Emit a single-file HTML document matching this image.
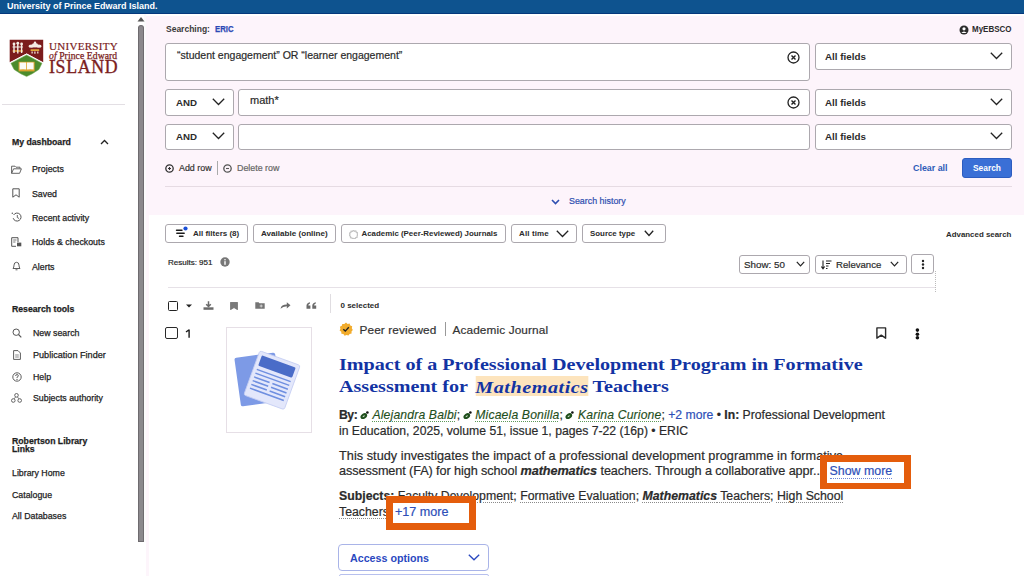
<!DOCTYPE html>
<html><head><meta charset="utf-8">
<style>
*{box-sizing:border-box;margin:0;padding:0}
html,body{width:1024px;height:576px;overflow:hidden;background:#fff;font-family:"Liberation Sans",sans-serif;color:#222}
#sidebar .a{color:#1e1e1e;-webkit-text-stroke:0.25px #1e1e1e}
.a{position:absolute;white-space:nowrap}
.b{font-weight:bold}
.w{-webkit-text-stroke:0.2px currentColor}
.box{position:absolute;background:#fff;border:1px solid #aca8ae;border-radius:3px}
.chev{position:absolute}
.an{letter-spacing:0.15px;color:#1f4f1c;text-decoration:underline dotted #5f9a5a;text-decoration-thickness:1px;text-underline-offset:1.5px;-webkit-text-stroke:0.15px #1f4f1c}
.au{vertical-align:-0.5px;margin:0 0.2px 0 -0.8px}
.hl{background:#fde4bd;letter-spacing:0.5px;padding:0.5px 0 0 0;margin-left:2.2px;margin-right:-0.8px}
.su{text-decoration:underline dotted #8a8a8a;text-decoration-thickness:1px;text-underline-offset:1.5px}
</style></head><body>

<!-- top bar -->
<div class="a" style="left:0;top:0;width:1024px;height:12.5px;background:#0e538f"></div>
<div class="a" style="left:0;top:12.5px;width:1024px;height:1.6px;background:#04387c"></div>
<div class="a b" style="left:7px;top:1px;font-size:9px;line-height:11px;color:#fff">University of Prince Edward Island.</div>

<!-- sidebar -->
<div id="sidebar">
 <!-- logo -->
 <svg class="a" style="left:9px;top:39px" width="35" height="40" viewBox="0 0 35 40">
  <path d="M0.7 0.8 H34.2 V23.2 L17.6 14.4 L0.7 23.2 Z" fill="#7b1c1c"/>
  <path d="M0.7 23.6 L17.6 14.6 L34.2 23.6 L30.8 30.8 Q24 35.5 17.6 38.7 Q11 35.5 4.2 30.8 Z" fill="#fff"/>
  <path d="M1.9 24.2 L17.6 15.9 L33 24.2 L30 30.4 Q23.5 35 17.6 37.6 Q11.5 35 5 30.4 Z" fill="#4b8b2c" stroke="#7fb463" stroke-width="0.5"/>
  <rect x="9.6" y="22.8" width="16" height="9.6" fill="#dca22e"/>
  <path d="M10.6 23.6 H17.2 V30.6 Q14 29.8 10.6 30.6Z M18 23.6 H24.6 V30.6 Q21.2 29.8 18 30.6Z" fill="#fbfbf6"/>
  <path d="M3.6 11.2 H14 V12.8 H3.6Z M21.6 10.2 H30.2 V12 H21.6Z" fill="#e2a83a"/>
  <g fill="#f4ece4">
   <circle cx="5" cy="5" r="1.4"/><circle cx="8.8" cy="4.2" r="1.4"/><circle cx="12.6" cy="5" r="1.4"/>
   <path d="M4.3 5 h1.4 v9 h-1.4z M8.1 4.5 h1.4 v10 h-1.4z M11.9 5 h1.4 v9 h-1.4z M3.5 7.5 H14 V8.6 H3.5Z"/>
   <ellipse cx="22.3" cy="7.2" rx="2.8" ry="1.6"/><ellipse cx="29.8" cy="7.2" rx="2.8" ry="1.6"/><ellipse cx="26" cy="6.2" rx="3" ry="2.2"/><circle cx="26" cy="3.8" r="1.2"/>
   <path d="M22.5 12.5 h1.2 v2 h-1.2z M25.3 12.5 h1.2 v2.2 h-1.2z M28.2 12.5 h1.2 v2 h-1.2z"/>
  </g>
 </svg>
 <div class="a" style="left:49px;top:40px;font-family:'Liberation Serif',serif;font-size:11px;line-height:12px;color:#7b1d1d;letter-spacing:0.3px;-webkit-text-stroke:0.2px #7b1d1d">UNIVERSITY</div>
 <div class="a" style="left:49px;top:49.5px;font-family:'Liberation Serif',serif;font-size:9.6px;line-height:11px;color:#7b1d1d;letter-spacing:0.1px;-webkit-text-stroke:0.25px #7b1d1d"><i>of</i> Prince Edward</div>
 <div class="a" style="left:49px;top:57.5px;font-family:'Liberation Serif',serif;font-size:17.8px;line-height:18px;color:#7b1d1d;letter-spacing:0.7px;-webkit-text-stroke:0.35px #7b1d1d">ISLAND</div>
 <div class="a" style="left:2px;top:104px;width:123px;height:1px;background:#e3dfe4"></div>

 <div class="a b" style="left:12px;top:137px;font-size:8.7px;line-height:11px">My dashboard</div>
 <svg class="a" style="left:100px;top:139px" width="9" height="6" viewBox="0 0 9 6"><path d="M1 5 L4.5 1.5 L8 5" fill="none" stroke="#222" stroke-width="1.3"/></svg>

 <div class="a" style="left:32px;top:164px;font-size:8.8px;line-height:11px">Projects</div>
 <div class="a" style="left:32px;top:188.5px;font-size:8.8px;line-height:11px">Saved</div>
 <div class="a" style="left:32px;top:213px;font-size:8.8px;line-height:11px">Recent activity</div>
 <div class="a" style="left:32px;top:237px;font-size:8.8px;line-height:11px">Holds &amp; checkouts</div>
 <div class="a" style="left:32px;top:261.5px;font-size:8.8px;line-height:11px">Alerts</div>

 <div class="a b" style="left:12px;top:304px;font-size:8.7px;line-height:11px">Research tools</div>
 <div class="a" style="left:33px;top:328px;font-size:8.8px;line-height:11px">New search</div>
 <div class="a" style="left:33px;top:350px;font-size:9.1px;line-height:11px">Publication Finder</div>
 <div class="a" style="left:33px;top:372px;font-size:8.8px;line-height:11px">Help</div>
 <div class="a" style="left:33px;top:393px;font-size:8.8px;line-height:11px">Subjects authority</div>

 <div class="a b" style="left:12px;top:436.5px;font-size:8.7px;line-height:8.4px">Robertson Library<br>Links</div>
 <div class="a" style="left:12px;top:468px;font-size:8.8px;line-height:11px">Library Home</div>
 <div class="a" style="left:12px;top:490px;font-size:8.8px;line-height:11px">Catalogue</div>
 <div class="a" style="left:12px;top:511px;font-size:8.8px;line-height:11px">All Databases</div>
</div>


<!-- sidebar icons -->
<svg class="a" style="left:11px;top:165px" width="11" height="9" viewBox="0 0 11 9"><path d="M0.6 1.2 H4 L5 2.2 H9 V3.5 M0.6 1.2 V8.3 H8.6 L10.4 3.8 H2.6 L0.6 8.3" fill="none" stroke="#555" stroke-width="0.9" stroke-linejoin="round"/></svg>
<svg class="a" style="left:12px;top:188px" width="8" height="10" viewBox="0 0 8 10"><path d="M0.8 0.8 H7.2 V9.2 L4 6.8 L0.8 9.2Z" fill="none" stroke="#555" stroke-width="1" stroke-linejoin="round"/></svg>
<svg class="a" style="left:11px;top:212px" width="11" height="10" viewBox="0 0 11 10"><path d="M2.6 3 A4 4 0 1 1 2.2 6.2" fill="none" stroke="#555" stroke-width="1"/><path d="M6.3 3 V5.5 L8 6.5" fill="none" stroke="#555" stroke-width="0.9"/><circle cx="1.3" cy="1.2" r="0.7" fill="#555"/></svg>
<svg class="a" style="left:11px;top:237px" width="11" height="10" viewBox="0 0 11 10"><path d="M0.7 0.7 H7 V5 M0.7 0.7 V9.3 H5" fill="none" stroke="#555" stroke-width="1"/><path d="M2.2 3 H5.5 M2.2 5 H4.5" stroke="#555" stroke-width="0.8"/><rect x="6" y="5.6" width="4.3" height="3.7" fill="#555"/></svg>
<svg class="a" style="left:12px;top:261px" width="9" height="10" viewBox="0 0 9 10"><path d="M1 7.5 Q2 6.3 2 4.2 Q2 1.3 4.5 1.3 Q7 1.3 7 4.2 Q7 6.3 8 7.5Z" fill="none" stroke="#555" stroke-width="0.95" stroke-linejoin="round"/><path d="M3.5 8.8 H5.5" stroke="#555" stroke-width="0.9"/></svg>

<svg class="a" style="left:12px;top:328px" width="10" height="10" viewBox="0 0 10 10"><circle cx="4.2" cy="4.2" r="3.2" fill="none" stroke="#555" stroke-width="1"/><path d="M6.5 6.5 L9.3 9.3" stroke="#555" stroke-width="1.1"/></svg>
<svg class="a" style="left:13px;top:350px" width="8" height="10" viewBox="0 0 8 10"><path d="M0.6 0.6 H5 L7.4 3 V9.4 H0.6Z" fill="none" stroke="#555" stroke-width="0.95" stroke-linejoin="round"/><path d="M2.2 5 H5.8 M2.2 7 H5.8" stroke="#555" stroke-width="0.7"/></svg>
<svg class="a" style="left:12px;top:372px" width="10" height="10" viewBox="0 0 10 10"><circle cx="5" cy="5" r="4.2" fill="none" stroke="#555" stroke-width="0.95"/><path d="M3.6 4 Q3.6 2.6 5 2.6 Q6.4 2.6 6.4 3.8 Q6.4 4.7 5 5.2 V6" fill="none" stroke="#555" stroke-width="0.9"/><circle cx="5" cy="7.4" r="0.6" fill="#555"/></svg>
<svg class="a" style="left:11px;top:393px" width="11" height="10" viewBox="0 0 11 10"><circle cx="5.5" cy="2.3" r="1.8" fill="none" stroke="#555" stroke-width="0.9"/><circle cx="2.3" cy="7.5" r="1.8" fill="none" stroke="#555" stroke-width="0.9"/><circle cx="8.7" cy="7.5" r="1.8" fill="none" stroke="#555" stroke-width="0.9"/><path d="M4.5 4 L3.2 5.8 M6.5 4 L7.8 5.8" stroke="#555" stroke-width="0.8"/></svg>

<!-- scrollbar -->
<div class="a" style="left:144px;top:14px;width:2px;height:528px;background:#fbfafb"></div>
<svg class="a" style="left:137px;top:16px" width="8" height="6" viewBox="0 0 8 6"><path d="M0.5 5.5 L4 1 L7.5 5.5Z" fill="#555"/></svg>
<div class="a" style="left:137.8px;top:25px;width:6px;height:517px;background:#8b888c;border:1px solid #6e6b6f;border-radius:3px 3px 0.5px 0.5px"></div>
<div class="a" style="left:146px;top:214px;width:2.5px;height:528px;background:#fdf5fb"></div>

<!-- search panel -->
<div class="a" style="left:146px;top:15.5px;width:878px;height:199px;background:#fdf4fb"></div>
<div class="a b" style="left:166px;top:24px;font-size:8.5px;line-height:11px;color:#3a3a3a">Searching:</div>
<div class="a b" style="left:215px;top:23.5px;font-size:9px;line-height:11px;color:#2c48b5;-webkit-text-stroke:0.25px #2c48b5;transform:scaleX(0.86);transform-origin:0 0">ERIC</div>
<svg class="a" style="left:959px;top:25px" width="10" height="10" viewBox="0 0 10 10"><circle cx="5" cy="5" r="4.5" fill="#2b2b2b"/><circle cx="5" cy="3.8" r="1.6" fill="#fff"/><path d="M2.3 8 Q5 5 7.7 8" fill="#fff"/></svg>
<div class="a b" style="left:972px;top:23.5px;font-size:8.7px;line-height:11px;color:#2b2b2b;transform:scaleX(0.92);transform-origin:0 0">MyEBSCO</div>


<!-- search rows -->
<div class="box" style="left:165px;top:43px;width:645px;height:38px"></div>
<div class="a w" style="left:177px;top:49px;font-size:10.5px;line-height:13px;color:#2b2b2b">“student engagement” OR “learner engagement”</div>
<svg class="a" style="left:787px;top:51px" width="13" height="13" viewBox="0 0 13 13"><circle cx="6.5" cy="6.5" r="5.5" fill="none" stroke="#222" stroke-width="1.3"/><path d="M4.5 4.5 L8.5 8.5 M8.5 4.5 L4.5 8.5" stroke="#222" stroke-width="1.4"/></svg>
<div class="box" style="left:815px;top:43px;width:197px;height:27px"></div>
<div class="a b" style="left:825px;top:50px;font-size:9.8px;line-height:13px;color:#2b2b2b">All fields</div>
<svg class="a" style="left:990px;top:52px" width="13" height="8" viewBox="0 0 13 8"><path d="M0.8 0.8 L6.5 6.5 L12.2 0.8" fill="none" stroke="#222" stroke-width="1.3"/></svg>

<div class="box" style="left:165px;top:89px;width:69px;height:27px"></div>
<div class="a b" style="left:176px;top:96px;font-size:9.7px;line-height:13px;color:#2b2b2b">AND</div>
<svg class="a" style="left:212px;top:98px" width="13" height="8" viewBox="0 0 13 8"><path d="M0.8 0.8 L6.5 6.5 L12.2 0.8" fill="none" stroke="#222" stroke-width="1.3"/></svg>
<div class="box" style="left:238px;top:89px;width:572px;height:27px"></div>
<div class="a w" style="left:250px;top:94px;font-size:11px;line-height:13px;color:#2b2b2b">math*</div>
<svg class="a" style="left:787px;top:96px" width="13" height="13" viewBox="0 0 13 13"><circle cx="6.5" cy="6.5" r="5.5" fill="none" stroke="#222" stroke-width="1.3"/><path d="M4.5 4.5 L8.5 8.5 M8.5 4.5 L4.5 8.5" stroke="#222" stroke-width="1.4"/></svg>
<div class="box" style="left:815px;top:89px;width:197px;height:27px"></div>
<div class="a b" style="left:825px;top:96px;font-size:9.8px;line-height:13px;color:#2b2b2b">All fields</div>
<svg class="a" style="left:990px;top:98px" width="13" height="8" viewBox="0 0 13 8"><path d="M0.8 0.8 L6.5 6.5 L12.2 0.8" fill="none" stroke="#222" stroke-width="1.3"/></svg>

<div class="box" style="left:165px;top:124px;width:69px;height:26px"></div>
<div class="a b" style="left:176px;top:130px;font-size:9.7px;line-height:13px;color:#2b2b2b">AND</div>
<svg class="a" style="left:212px;top:132px" width="13" height="8" viewBox="0 0 13 8"><path d="M0.8 0.8 L6.5 6.5 L12.2 0.8" fill="none" stroke="#222" stroke-width="1.3"/></svg>
<div class="box" style="left:238px;top:124px;width:572px;height:26px"></div>
<div class="box" style="left:815px;top:124px;width:197px;height:26px"></div>
<div class="a b" style="left:825px;top:130px;font-size:9.8px;line-height:13px;color:#2b2b2b">All fields</div>
<svg class="a" style="left:990px;top:132px" width="13" height="8" viewBox="0 0 13 8"><path d="M0.8 0.8 L6.5 6.5 L12.2 0.8" fill="none" stroke="#222" stroke-width="1.3"/></svg>

<svg class="a" style="left:165px;top:164px" width="9" height="9" viewBox="0 0 9 9"><circle cx="4.5" cy="4.5" r="3.7" fill="none" stroke="#333" stroke-width="1.3"/><path d="M3 4.5 H6 M4.5 3 V6" stroke="#333" stroke-width="1.1"/></svg>
<div class="a" style="left:179px;top:163px;font-size:8.9px;line-height:11px;color:#333;-webkit-text-stroke:0.2px #333">Add row</div>
<div class="a" style="left:217px;top:161px;width:1px;height:14px;background:#aaa"></div>
<svg class="a" style="left:223px;top:164px" width="9" height="9" viewBox="0 0 9 9"><circle cx="4.5" cy="4.5" r="3.7" fill="none" stroke="#555" stroke-width="1.3"/><path d="M3 4.5 H6" stroke="#555" stroke-width="1.1"/></svg>
<div class="a" style="left:237px;top:163px;font-size:8.9px;line-height:11px;color:#666;-webkit-text-stroke:0.2px #666">Delete row</div>

<div class="a b" style="left:913px;top:163px;font-size:8.9px;line-height:11px;color:#2e5bb8">Clear all</div>
<div class="a" style="left:962px;top:158px;width:50px;height:20px;background:#3a6fd6;border:1px solid #2c5cc0;border-radius:3px"></div>
<div class="a b" style="left:973px;top:163px;font-size:8.4px;line-height:11px;color:#fff">Search</div>

<div class="a" style="left:165px;top:186px;width:847px;height:1px;background:#e6dbe3"></div>
<svg class="a" style="left:551px;top:199px" width="9" height="6" viewBox="0 0 9 6"><path d="M1 1 L4.5 4.5 L8 1" fill="none" stroke="#2e4fb0" stroke-width="1.6"/></svg>
<div class="a w" style="left:569px;top:196px;font-size:8.9px;line-height:11px;color:#2e4fb0">Search history</div>

<!-- filter row -->
<div class="box" style="left:165px;top:224px;width:83px;height:19px"></div>
<svg class="a" style="left:175px;top:225px" width="13" height="14" viewBox="0 0 13 14"><path d="M1.5 5.3 H7 M1.8 8.3 H9.2 M4.5 11.3 H8" stroke="#1a1a1a" stroke-width="1.4" stroke-linecap="round"/><circle cx="10.5" cy="3.5" r="2.1" fill="#1a4fd8"/></svg>
<div class="a b" style="left:193px;top:228px;font-size:8px;line-height:11px;color:#2b2b2b">All filters (8)</div>
<div class="box" style="left:253px;top:224px;width:83px;height:19px"></div>
<div class="a b" style="left:261px;top:228px;font-size:8.1px;line-height:11px;color:#2b2b2b">Available (online)</div>
<div class="box" style="left:341px;top:224px;width:165px;height:19px"></div>
<svg class="a" style="left:348.5px;top:229.5px" width="9" height="9" viewBox="0 0 14 14"><path d="M7 0.6 L8.6 1.9 L10.6 1.5 L11.3 3.4 L13.2 4.2 L12.8 6.2 L13.8 7.9 L12.5 9.4 L12.6 11.4 L10.6 11.9 L9.5 13.6 L7.5 13 L5.6 13.8 L4.4 12.1 L2.4 11.8 L2.3 9.8 L0.6 8.6 L1.4 6.8 L0.9 4.8 L2.8 3.8 L3.3 1.9 L5.3 2.1Z" fill="none" stroke="#c4c4c4" stroke-width="2"/></svg>
<div class="a b" style="left:361.5px;top:228px;font-size:7.9px;line-height:11px;color:#2b2b2b">Academic (Peer-Reviewed) Journals</div>
<div class="box" style="left:511px;top:224px;width:66px;height:19px"></div>
<div class="a b" style="left:519px;top:228px;font-size:8px;letter-spacing:0.12px;line-height:11px;color:#2b2b2b">All time</div>
<svg class="a" style="left:556px;top:230px" width="13" height="8" viewBox="0 0 13 8"><path d="M0.8 0.8 L6.5 6.5 L12.2 0.8" fill="none" stroke="#222" stroke-width="1.3"/></svg>
<div class="box" style="left:582px;top:224px;width:84px;height:19px"></div>
<div class="a b" style="left:590px;top:228px;font-size:7.9px;line-height:11px;color:#2b2b2b">Source type</div>
<svg class="a" style="left:644px;top:230px" width="10" height="7" viewBox="0 0 10 7"><path d="M0.8 0.8 L5 5.5 L9.2 0.8" fill="none" stroke="#222" stroke-width="1.3"/></svg>
<div class="a b" style="left:946px;top:229px;font-size:7.9px;line-height:11px;color:#2b2b2b">Advanced search</div>

<div class="a" style="left:168px;top:257px;font-size:8px;line-height:11px;color:#1e1e1e;-webkit-text-stroke:0.2px #1e1e1e">Results: 951</div>
<svg class="a" style="left:219.5px;top:257px" width="10" height="10" viewBox="0 0 10 10"><circle cx="5" cy="5" r="4.7" fill="#777"/><rect x="4.3" y="4.2" width="1.4" height="3.6" fill="#fff"/><circle cx="5" cy="2.8" r="0.8" fill="#fff"/></svg>

<div class="box" style="left:738.5px;top:254.5px;width:71.5px;height:19.5px"></div>
<div class="a w" style="left:744px;top:258.8px;font-size:9.8px;line-height:12px;color:#2b2b2b">Show: 50</div>
<svg class="a" style="left:796px;top:261px" width="9" height="6" viewBox="0 0 9 6"><path d="M0.8 0.8 L4.5 4.8 L8.2 0.8" fill="none" stroke="#222" stroke-width="1.2"/></svg>
<div class="box" style="left:814.5px;top:254.5px;width:92px;height:19.5px"></div>
<svg class="a" style="left:820.5px;top:259.5px" width="11" height="10" viewBox="0 0 11 10"><path d="M2 0.5 V8.5 M0.3 6.5 L2 8.8 L3.7 6.5 M5 1 H10.5 M5 3.5 H9 M5 6 H7.5 M5 8.5 H6.5" fill="none" stroke="#222" stroke-width="1.1"/></svg>
<div class="a w" style="left:836px;top:258.8px;font-size:9.6px;line-height:12px;color:#2b2b2b">Relevance</div>
<svg class="a" style="left:890px;top:261px" width="9" height="6" viewBox="0 0 9 6"><path d="M0.8 0.8 L4.5 4.8 L8.2 0.8" fill="none" stroke="#222" stroke-width="1.2"/></svg>
<div class="box" style="left:911px;top:254px;width:23px;height:20px"></div>
<svg class="a" style="left:920.5px;top:259px" width="4" height="11" viewBox="0 0 4 11"><circle cx="2" cy="2" r="1.2" fill="#222"/><circle cx="2" cy="5.5" r="1.2" fill="#222"/><circle cx="2" cy="9" r="1.2" fill="#222"/></svg>
<div class="a" style="left:935px;top:271px;width:1px;height:21px;border-left:1px dotted #bbb"></div>
<div class="a" style="left:168px;top:287px;width:767px;height:1px;background:#e6e1e7"></div>


<!-- toolbar -->
<div class="a" style="left:168px;top:301px;width:10px;height:10px;border:1.5px solid #222;border-radius:1.5px"></div>
<svg class="a" style="left:186px;top:304px" width="6" height="4" viewBox="0 0 6 4"><path d="M0 0.5 H6 L3 3.5Z" fill="#222"/></svg>
<svg class="a" style="left:202.5px;top:300.5px" width="11" height="9" viewBox="0 0 11 9"><path d="M5.5 0.3 V5.2 M3.2 3.2 L5.5 5.5 L7.8 3.2" fill="none" stroke="#6a6a6a" stroke-width="1.5"/><path d="M0.5 6.3 H10.5 V8.8 H0.5Z" fill="#6a6a6a"/></svg>
<svg class="a" style="left:230px;top:301.5px" width="8" height="8" viewBox="0 0 8 8"><path d="M0.5 0.3 H7.5 V7.8 L4 5.6 L0.5 7.8Z" fill="#7a7a7a" stroke="#5e5e5e" stroke-width="0.6"/></svg>
<svg class="a" style="left:255px;top:302px" width="10" height="7" viewBox="0 0 10 7"><path d="M0.3 0.3 H3.6 L4.5 1.2 H9.7 V6.7 H0.3Z" fill="#757575"/><path d="M6.2 2.5 V5.5 M4.7 4 H7.7" stroke="#ddd" stroke-width="0.9"/></svg>
<svg class="a" style="left:280px;top:302px" width="11" height="7" viewBox="0 0 11 7"><path d="M0.5 6.8 Q1.3 2.6 6.8 2.6 V0.2 L10.5 3.3 L6.8 6.4 V4.3 Q3 4.3 0.5 6.8Z" fill="#6a6a6a"/></svg>
<svg class="a" style="left:305.5px;top:302px" width="11" height="7" viewBox="0 0 11 7"><path d="M0.5 6.8 V3.6 Q0.5 0.8 4 0.2 V1.4 Q2.3 1.9 2.3 3.4 H4.4 V6.8Z M6.3 6.8 V3.6 Q6.3 0.8 9.8 0.2 V1.4 Q8.1 1.9 8.1 3.4 H10.2 V6.8Z" fill="#6a6a6a"/></svg>
<div class="a" style="left:330px;top:294px;width:1px;height:19px;background:#e0dde1"></div>
<div class="a b" style="left:340.5px;top:300px;font-size:8px;line-height:11px;color:#2b2b2b">0 selected</div>

<!-- result 1 -->
<div class="a" style="left:165px;top:327.2px;width:12.8px;height:11.5px;border:1.8px solid #2a2a2a;border-radius:2px"></div>
<svg class="a" style="left:185px;top:329px" width="6" height="10" viewBox="0 0 6 10"><path d="M4.1 0.6 V8.8 M4.1 0.8 L1 3" fill="none" stroke="#1a1a1a" stroke-width="1.4"/></svg>
<div class="a" style="left:226px;top:327px;width:86px;height:106px;border:1px solid #e6dfe6;background:#fff"></div>
<svg class="a" style="left:226px;top:327px" width="86" height="106" viewBox="0 0 86 106">
 <g transform="translate(32,52.5) rotate(-8)"><rect x="-20.5" y="-24.5" width="41" height="49" rx="2" fill="#7d9ae6"/></g>
 <g transform="translate(46,53.2) rotate(20)">
  <rect x="-21.5" y="-23.5" width="43" height="47" rx="2" fill="#e3e7fb" stroke="#c4cdf3" stroke-width="0.8"/>
  <rect x="-18" y="-20" width="36" height="11" rx="1.2" fill="#4a6cc8"/>
  <g stroke="#6f8fe0" stroke-width="1.5">
   <path d="M-18 -5 H18 M-18 -1 H18 M-18 3 H-1.5 M1.5 3 H18 M-18 7 H-1.5 M1.5 7 H18 M-18 11 H-1.5 M1.5 11 H18 M-18 15 H18"/>
  </g>
 </g>
</svg>

<svg class="a" style="left:338.5px;top:322px" width="14" height="14" viewBox="0 0 14 14"><path d="M7 0.6 L8.6 1.9 L10.6 1.5 L11.3 3.4 L13.2 4.2 L12.8 6.2 L13.8 7.9 L12.5 9.4 L12.6 11.4 L10.6 11.9 L9.5 13.6 L7.5 13 L5.6 13.8 L4.4 12.1 L2.4 11.8 L2.3 9.8 L0.6 8.6 L1.4 6.8 L0.9 4.8 L2.8 3.8 L3.3 1.9 L5.3 2.1Z" fill="#f2ac2c"/><path d="M4.3 7.2 L6.3 9.1 L9.8 5.3" fill="none" stroke="#222" stroke-width="1.4"/></svg>
<div class="a w" style="left:359.5px;top:322.5px;font-size:11.8px;letter-spacing:0.12px;line-height:15px;color:#333">Peer reviewed</div>
<div class="a" style="left:445px;top:322px;width:1px;height:14px;background:#999"></div>
<div class="a w" style="left:452.5px;top:322.5px;font-size:11.8px;letter-spacing:0.12px;line-height:15px;color:#333">Academic Journal</div>
<svg class="a" style="left:876px;top:327px" width="11" height="12" viewBox="0 0 11 12"><path d="M0.9 0.9 H9.6 V11.2 L5.25 8.2 L0.9 11.2Z" fill="none" stroke="#2a2a2a" stroke-width="1.4" stroke-linejoin="round"/></svg>
<svg class="a" style="left:915px;top:327.5px" width="5" height="12" viewBox="0 0 5 12"><circle cx="2.4" cy="2.1" r="1.8" fill="#111"/><circle cx="2.4" cy="6.3" r="1.8" fill="#111"/><circle cx="2.4" cy="9.8" r="1.8" fill="#111"/></svg>

<div class="a b" style="left:339px;top:353px;font-family:'Liberation Serif',serif;font-size:17.5px;line-height:22px;color:#1233a3;transform:scaleX(1.149);transform-origin:0 0">Impact of a Professional Development Program in Formative<br>Assessment for <i class="hl">Mathematics</i> Teachers</div>

<div class="a w" style="left:339px;top:406.5px;font-size:12.2px;line-height:16px;color:#2b2b2b"><b style="letter-spacing:-0.45px">By:</b> <svg class="au" width="9" height="8" viewBox="0 0 9 8"><ellipse cx="3.8" cy="5.1" rx="3.6" ry="2.5" transform="rotate(-35 3.8 5.1)" fill="#1f4f1c"/><ellipse cx="3.7" cy="5.2" rx="1.3" ry="0.6" transform="rotate(-35 3.7 5.2)" fill="#cfe0cc"/><circle cx="7.4" cy="1.5" r="1.3" fill="#111"/></svg> <i class="an">Alejandra Balbi</i>; <svg class="au" width="9" height="8" viewBox="0 0 9 8"><ellipse cx="3.8" cy="5.1" rx="3.6" ry="2.5" transform="rotate(-35 3.8 5.1)" fill="#1f4f1c"/><ellipse cx="3.7" cy="5.2" rx="1.3" ry="0.6" transform="rotate(-35 3.7 5.2)" fill="#cfe0cc"/><circle cx="7.4" cy="1.5" r="1.3" fill="#111"/></svg> <i class="an">Micaela Bonilla</i>; <svg class="au" width="9" height="8" viewBox="0 0 9 8"><ellipse cx="3.8" cy="5.1" rx="3.6" ry="2.5" transform="rotate(-35 3.8 5.1)" fill="#1f4f1c"/><ellipse cx="3.7" cy="5.2" rx="1.3" ry="0.6" transform="rotate(-35 3.7 5.2)" fill="#cfe0cc"/><circle cx="7.4" cy="1.5" r="1.3" fill="#111"/></svg> <i class="an">Karina Curione</i>; <span style="color:#2e4fb8">+2 more</span> • <b>In:</b> Professional Development<br>in Education, 2025, volume 51, issue 1, pages 7-22 (16p) • ERIC</div>

<div class="a w" style="left:339px;top:449px;font-size:12.7px;line-height:15.2px;color:#2b2b2b"><span style="letter-spacing:0.04px">This study investigates the impact of a professional development programme in formative</span><br><span style="letter-spacing:-0.1px">assessment (FA) for high school <b><i>mathematics</i></b> teachers. Through a collaborative appr...</span></div>

<div class="a w" style="left:339px;top:489px;font-size:12.3px;line-height:15.8px;color:#2b2b2b"><b>Subjects:</b> <span class="su">Faculty Development</span>; <span class="su">Formative Evaluation</span>; <span class="su"><b><i>Mathematics</i></b> Teachers</span>; <span class="su">High School</span><br><span class="su">Teachers</span>; </div>

<div class="a" style="left:820px;top:454.5px;width:90.5px;height:34px;border:7px solid #e45d0c;border-bottom-width:6.7px;background:#fff"></div>
<div class="a w" style="left:829.5px;top:463.7px;font-size:12.4px;line-height:14px;color:#2e4fb8;border-bottom:1px dotted #6f86d6">Show more</div>
<div class="a" style="left:385.5px;top:496px;width:90.5px;height:33.5px;border:7px solid #e45d0c;background:#fff"></div>
<div class="a w" style="left:395px;top:505px;font-size:12.6px;line-height:15px;color:#2e4fb8">+17 more</div>

<div class="a" style="left:338px;top:544px;width:151px;height:27px;border:1px solid #a9b4e8;border-radius:4px;background:#fff"></div>
<div class="a b" style="left:350px;top:551.5px;font-size:10.7px;line-height:13px;color:#2a48bf">Access options</div>
<svg class="a" style="left:468px;top:554px" width="12" height="7" viewBox="0 0 12 7"><path d="M0.8 0.8 L6 5.8 L11.2 0.8" fill="none" stroke="#2a48bf" stroke-width="1.3"/></svg>
<div class="a" style="left:339px;top:574px;width:150px;height:4px;border:1px solid #b7c0ee;border-radius:3px"></div>

</body></html>
